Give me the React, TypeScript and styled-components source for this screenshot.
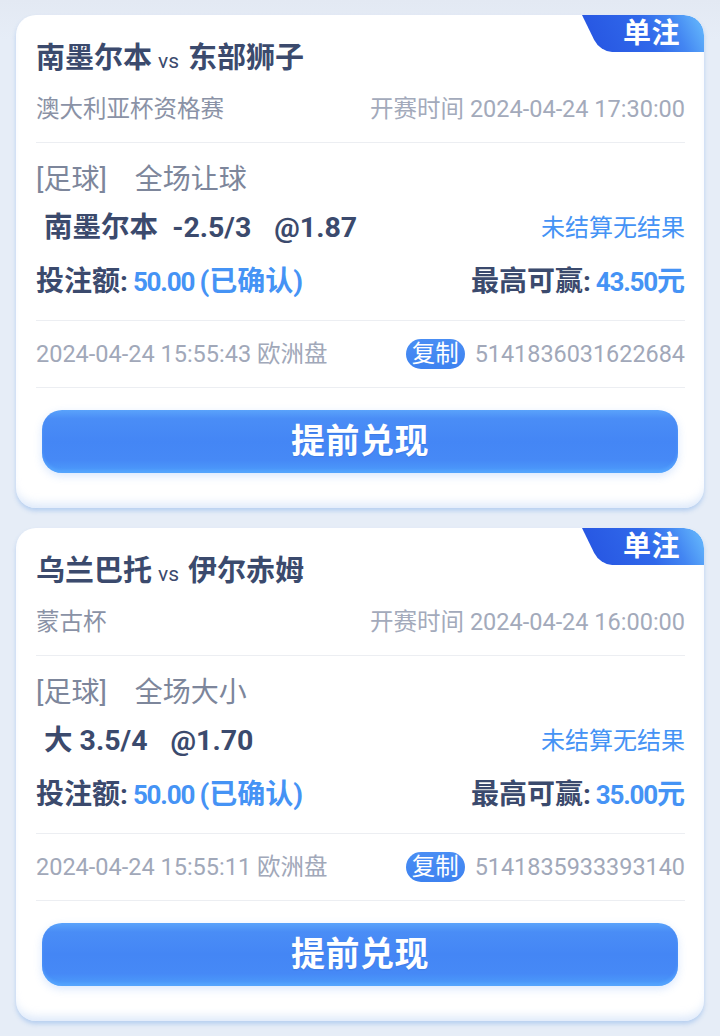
import React from "react";
import styled, { createGlobalStyle } from "styled-components";

const GlobalStyle = createGlobalStyle`
  html, body { margin: 0; padding: 0; }
  body {
    background: #e6edf7;
    font-family: Roboto, "Noto Sans CJK SC", sans-serif;
    -webkit-font-smoothing: antialiased;
  }
`;

const Page = styled.div`
  display: flex;
  flex-direction: column;
  gap: 20px;
  padding: 15px 16px 0 16px;
  min-height: 1036px;
  box-sizing: border-box;
  background: linear-gradient(180deg, #e3e9f3 0%, #e6edf7 40px);
`;

const Card = styled.div`
  position: relative;
  overflow: hidden;
  background: #fff;
  border-radius: 20px;
  padding: 25px 19px 35px 20px;
  display: flex;
  flex-direction: column;
  box-shadow: 0 3px 4px rgba(175, 202, 238, 0.85),
    inset 0 -9px 10px -5px rgba(208, 224, 248, 0.75);
`;

const Badge = styled.div`
  position: absolute;
  top: 0;
  right: 0;
  width: 122px;
  height: 37px;
  overflow: hidden;
  border-top-right-radius: 20px;
  display: flex;
  align-items: center;
  justify-content: flex-end;
  padding-right: 24px;
  box-sizing: border-box;
  &::before {
    content: "";
    position: absolute;
    top: 0;
    left: 0;
    width: 140px;
    height: 37px;
    transform: skewX(26deg);
    transform-origin: top left;
    border-bottom-left-radius: 12px;
    background: linear-gradient(90deg, #2858e3 0%, #3068ea 40%, #4386f2 62%, #5eaefa 80%);
  }
`;

const BadgeText = styled.span`
  position: relative;
  color: #fff;
  font-size: 28px;
  font-weight: 700;
  line-height: 37px;
  letter-spacing: 0.5px;
`;

const Title = styled.div`
  display: flex;
  align-items: baseline;
  line-height: 36px;
  color: #3b4a6d;
`;

const Team = styled.span`
  font-size: 29px;
  font-weight: 700;
`;

const Vs = styled.span`
  font-size: 21px;
  font-weight: 400;
  margin: 0 9px 0 6px;
`;

const Row = styled.div<{ $mt: number; $lh: number }>`
  display: flex;
  justify-content: space-between;
  align-items: center;
  margin-top: ${(p) => p.$mt}px;
  line-height: ${(p) => p.$lh}px;
  height: ${(p) => p.$lh}px;
`;

const League = styled.span`
  font-size: 23.5px;
  color: #8a92a6;
`;

const StartTime = styled.span`
  font-size: 23.5px;
  color: #a3aabb;
`;

const Divider = styled.div<{ $mt: number }>`
  height: 1px;
  background: #eceef2;
  margin-top: ${(p) => p.$mt}px;
`;

const SportLine = styled.div`
  margin-top: 20px;
  line-height: 34px;
  font-size: 28px;
  color: #7d869b;
  white-space: pre;
`;

const Pick = styled.span`
  padding-left: 8px;
  font-size: 28.5px;
  font-weight: 700;
  color: #3b4a6d;
  white-space: pre;
`;

const Odds = styled.span`
  margin-left: 23px;
`;

const Status = styled.span`
  font-size: 24px;
  color: #4593f5;
`;

const Stake = styled.span`
  display: flex;
  align-items: baseline;
  white-space: pre;
`;

const StakeLabel = styled.span`
  font-size: 28px;
  font-weight: 700;
  color: #3b4a6d;
`;

const StakeValue = styled.span`
  margin-left: 5px;
  font-size: 26px;
  font-weight: 700;
  letter-spacing: -1.2px;
  color: #4593f5;
`;

const StakeNote = styled.span`
  font-size: 28px;
  font-weight: 700;
  color: #4593f5;
`;

const Meta = styled.span`
  font-size: 23.5px;
  color: #a1a8b9;
`;

const IdGroup = styled.span`
  display: flex;
  align-items: center;
  gap: 10px;
`;

const CopyPill = styled.span`
  display: inline-flex;
  align-items: center;
  height: 30px;
  padding: 0 6px;
  border-radius: 15px;
  background: linear-gradient(180deg, #4a8ef4 0%, #3d82f0 100%);
  color: #fff;
  font-size: 23.5px;
  line-height: 30px;
`;

const OrderId = styled.span`
  font-size: 23.4px;
  color: #a1a8b9;
`;

const CashoutButton = styled.button`
  margin: 22px 7px 0 6px;
  height: 63px;
  border: none;
  border-radius: 20px;
  background: linear-gradient(
    180deg,
    #5aa3fb 0%,
    #4a8df6 14%,
    #4486f5 50%,
    #4689f6 80%,
    #4d9dfb 100%
  );
  box-shadow: 0 3px 8px rgba(80, 145, 245, 0.22),
    inset 0 -3px 3px rgba(90, 170, 255, 0.6);
  color: #fff;
  font-family: Roboto, "Noto Sans CJK SC", sans-serif;
  font-size: 34px;
  font-weight: 700;
  letter-spacing: 0.5px;
  line-height: 63px;
  padding: 0;
  text-shadow: 0 1px 1px rgba(30, 80, 180, 0.25);
  cursor: pointer;
`;

type Bet = {
  home: string;
  away: string;
  league: string;
  start: string;
  market: string;
  pick: string;
  odds: string;
  stake: string;
  maxWin: string;
  placed: string;
  id: string;
};

const bets: Bet[] = [
  {
    home: "南墨尔本",
    away: "东部狮子",
    league: "澳大利亚杯资格赛",
    start: "开赛时间 2024-04-24 17:30:00",
    market: "[足球]　全场让球",
    pick: "南墨尔本  -2.5/3",
    odds: "@1.87",
    stake: "50.00",
    maxWin: "43.50",
    placed: "2024-04-24 15:55:43 欧洲盘",
    id: "5141836031622684",
  },
  {
    home: "乌兰巴托",
    away: "伊尔赤姆",
    league: "蒙古杯",
    start: "开赛时间 2024-04-24 16:00:00",
    market: "[足球]　全场大小",
    pick: "大 3.5/4",
    odds: "@1.70",
    stake: "50.00",
    maxWin: "35.00",
    placed: "2024-04-24 15:55:11 欧洲盘",
    id: "5141835933393140",
  },
];

function BetCard({ bet }: { bet: Bet }) {
  return (
    <Card>
      <Badge>
        <BadgeText>单注</BadgeText>
      </Badge>
      <Title>
        <Team>{bet.home}</Team>
        <Vs>vs</Vs>
        <Team>{bet.away}</Team>
      </Title>
      <Row $mt={15} $lh={30}>
        <League>{bet.league}</League>
        <StartTime>{bet.start}</StartTime>
      </Row>
      <Divider $mt={18} />
      <SportLine>{bet.market}</SportLine>
      <Row $mt={14} $lh={34}>
        <Pick>
          {bet.pick}
          <Odds>{bet.odds}</Odds>
        </Pick>
        <Status>未结算无结果</Status>
      </Row>
      <Row $mt={19} $lh={36}>
        <Stake>
          <StakeLabel>投注额:</StakeLabel>
          <StakeValue>{bet.stake} </StakeValue>
          <StakeNote>(已确认)</StakeNote>
        </Stake>
        <Stake>
          <StakeLabel>最高可赢:</StakeLabel>
          <StakeValue>{bet.maxWin}</StakeValue>
          <StakeNote>元</StakeNote>
        </Stake>
      </Row>
      <Divider $mt={20} />
      <Row $mt={16} $lh={34}>
        <Meta>{bet.placed}</Meta>
        <IdGroup>
          <CopyPill>复制</CopyPill>
          <OrderId>{bet.id}</OrderId>
        </IdGroup>
      </Row>
      <Divider $mt={16} />
      <CashoutButton>提前兑现</CashoutButton>
    </Card>
  );
}

export default function App() {
  return (
    <>
      <GlobalStyle />
      <Page>
        {bets.map((b) => (
          <BetCard key={b.id} bet={b} />
        ))}
      </Page>
    </>
  );
}
